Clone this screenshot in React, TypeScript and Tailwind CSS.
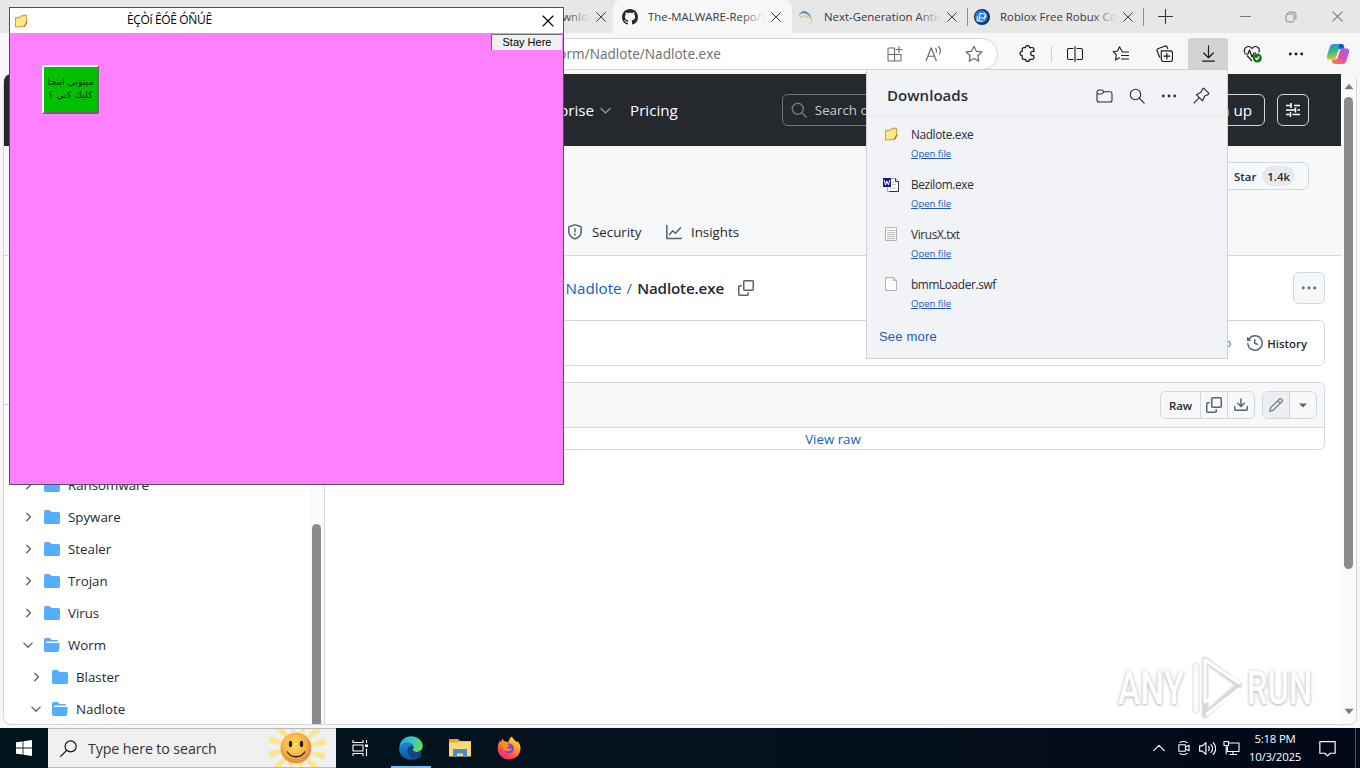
import React from 'react';

interface IconProps {
  className?: string;
  children: React.ReactNode;
  box?: string;
}

// 16px outline icon, stroke follows the text colour
const Line: React.FC<IconProps> = ({ className = 'w-4 h-4', children, box = '0 0 16 16' }) => (
  <svg viewBox={box} className={className} fill="none" stroke="currentColor" strokeWidth="1.1" strokeLinecap="round" strokeLinejoin="round">
    {children}
  </svg>
);

const Solid: React.FC<IconProps> = ({ className = 'w-4 h-4', children, box = '0 0 16 16' }) => (
  <svg viewBox={box} className={className} fill="currentColor">
    {children}
  </svg>
);

const Cross = ({ className }: { className?: string }) => (
  <Line className={className}>
    <path d="M3 3l10 10M13 3L3 13" />
  </Line>
);

const CopyIcon = () => (
  <Solid>
    <path d="M0 6.75C0 5.784.784 5 1.75 5h1.5a.75.75 0 0 1 0 1.5h-1.5a.25.25 0 0 0-.25.25v7.5c0 .138.112.25.25.25h7.5a.25.25 0 0 0 .25-.25v-1.5a.75.75 0 0 1 1.5 0v1.5A1.75 1.75 0 0 1 9.25 16h-7.5A1.75 1.75 0 0 1 0 14.25Z" />
    <path d="M5 1.75C5 .784 5.784 0 6.75 0h7.5C15.216 0 16 .784 16 1.75v7.5A1.75 1.75 0 0 1 14.25 11h-7.5A1.75 1.75 0 0 1 5 9.25Zm1.75-.25a.25.25 0 0 0-.25.25v7.5c0 .138.112.25.25.25h7.5a.25.25 0 0 0 .25-.25v-7.5a.25.25 0 0 0-.25-.25Z" />
  </Solid>
);

const DotsIcon = () => (
  <Solid>
    <circle cx="2.3" cy="8" r="1.4" />
    <circle cx="8" cy="8" r="1.4" />
    <circle cx="13.7" cy="8" r="1.4" />
  </Solid>
);

const StarIcon = () => (
  <Line className="w-[18px] h-[18px]">
    <path d="M8 1.2l2.1 4.4 4.8.6-3.5 3.3.9 4.8L8 12l-4.3 2.3.9-4.8L1.1 6.2l4.8-.6z" />
  </Line>
);

const YellowFolder = () => (
  <svg viewBox="0 0 14 14" className="w-[14px] h-[14px]">
    <path d="M1.5 3.5L6 3l1.5-1.5L12.5 1 13 8l-2.5 4.5-9 .5z" fill="#f3d467" stroke="#a98425" strokeWidth=".7" />
    <path d="M2 5l5-.5L8.5 3l3.5-.3L11 9l-1 2.8-8 .4z" fill="#fbe98c" />
    <path d="M10.5 12.5L13 8" stroke="#7d6010" strokeWidth="1" />
  </svg>
);

interface TabProps {
  title: string;
  icon: React.ReactNode;
  active?: boolean;
  className: string;
  divider?: boolean;
}

const Tab: React.FC<TabProps> = ({ title, icon, active, className, divider }) => (
  <div className={`relative flex items-center h-[33px] shrink-0 ${active ? 'bg-[#f7f7f7] rounded-t-lg' : ''} ${className}`}>
    <div className="w-4 h-4 shrink-0">{icon}</div>
    <div className="relative ml-[10px] w-[117px] overflow-hidden whitespace-nowrap text-[11.4px] text-[#3a3a3a]">
      {title}
      <div className={`absolute right-0 top-0 w-6 h-full bg-gradient-to-r from-transparent ${active ? 'to-[#f7f7f7]' : 'to-[#e7e7e7]'}`} />
    </div>
    <Cross className="w-[14px] h-[14px] ml-[4px] text-[#333] shrink-0" />
    {divider && <div className="absolute right-0 top-2 w-px h-[18px] bg-[#8d8d8d]" />}
  </div>
);

const TabStrip = () => (
  <div className="flex h-[33px] bg-[#e7e7e7]">
    <Tab title="MalwareBase Downloads" className="w-[176px] ml-[437px] pl-[10px]" icon={null} />
    <Tab
      title="The-MALWARE-Repo/Worm"
      active
      className="w-[179px] pl-[9px]"
      icon={
        <Solid className="w-4 h-4 text-[#24292f]">
          <path d="M8 0c4.42 0 8 3.58 8 8a8.013 8.013 0 0 1-5.45 7.59c-.4.08-.55-.17-.55-.38 0-.27.01-1.13.01-2.2 0-.75-.25-1.23-.54-1.48 1.78-.2 3.65-.88 3.65-3.95 0-.88-.31-1.59-.82-2.15.08-.2.36-1.02-.08-2.12 0 0-.67-.22-2.2.82-.64-.18-1.32-.27-2-.27-.68 0-1.36.09-2 .27-1.53-1.03-2.2-.82-2.2-.82-.44 1.1-.16 1.92-.08 2.12-.51.56-.82 1.28-.82 2.15 0 3.06 1.86 3.75 3.64 3.95-.23.2-.44.55-.51 1.07-.46.21-1.61.55-2.33-.66-.15-.24-.6-.83-1.23-.82-.67.01-.27.38.01.53.34.19.73.9.82 1.13.16.45.68 1.31 2.69.94 0 .67.01 1.3.01 1.49 0 .21-.15.45-.55.38A7.995 7.995 0 0 1 0 8c0-4.42 3.58-8 8-8Z" />
        </Solid>
      }
    />
    <Tab
      title="Next-Generation Antivirus"
      divider
      className="w-[176px] pl-[6px]"
      icon={
        <svg viewBox="0 0 16 16" className="w-4 h-4" fill="none" strokeWidth="1.2">
          <path d="M1 6C4 3 7 3 10 5.5" stroke="#7fa9bd" />
          <path d="M3 3.5c5-2 8.500 1 10 6" stroke="#2f7fa8" />
          <path d="M2 9c3-3 6-2.500 8.500 0" stroke="#b9c8ae" />
          <path d="M12 7.500c2.500 2 2.500 5 0 7" stroke="#f1cf5c" />
        </svg>
      }
    />
    <Tab
      title="Roblox Free Robux Codes"
      divider
      className="w-[176px] pl-[6px]"
      icon={
        <svg viewBox="0 0 16 16" className="w-4 h-4">
          <circle cx="8" cy="8" r="8" fill="#10305f" />
          <circle cx="7.4" cy="7.6" r="6.3" fill="#2f7fe0" />
          <path d="M5 11.5l1-7h3.500a2 2 0 0 1 0 4.500H5.500M3.500 7l-.5 5h6M11 6.500l-1 4" stroke="#e4f1ff" strokeWidth="1.1" fill="none" />
        </svg>
      }
    />
    <div className="flex items-center ml-[14px] text-[#333]">
      <Line className="w-[15px] h-[15px]">
        <path d="M8 .5v15M.5 8h15" />
      </Line>
    </div>
    <div className="flex items-center ml-auto text-[#777]">
      <div className="w-[46px] flex justify-center">
        <div className="w-[11px] h-px bg-[#777]" />
      </div>
      <div className="w-[46px] flex justify-center">
        <Line className="w-3 h-3">
          <rect x="1.5" y="4" width="10.5" height="10.5" rx="2" />
          <path d="M5 1.5h7a2.5 2.5 0 0 1 2.5 2.5v7" />
        </Line>
      </div>
      <div className="w-[46px] flex justify-center">
        <Cross className="w-[15px] h-[15px]" />
      </div>
    </div>
  </div>
);

const Copilot = () => (
  <svg viewBox="0 0 24 24" className="w-6 h-6">
    <defs>
      <linearGradient id="cpA" x1="0" y1="0" x2=".3" y2="1">
        <stop offset="0" stopColor="#1f8fe8" />
        <stop offset=".55" stopColor="#36b88c" />
        <stop offset="1" stopColor="#e6c52a" />
      </linearGradient>
      <linearGradient id="cpB" x1=".8" y1="0" x2="0" y2="1">
        <stop offset="0" stopColor="#a45be8" />
        <stop offset=".55" stopColor="#e8559a" />
        <stop offset="1" stopColor="#f78a45" />
      </linearGradient>
    </defs>
    <path d="M8 2h7.500c1.400 0 2 .9 2.400 2.200L18.500 6.500H15c-1.800 0-2.500 1-3 2.700L10.300 15c-.5 1.700-1.300 2.500-3 2.500H3.500C1 17.500.5 15.500 1.200 13L3.700 5C4.500 2.800 5.500 2 8 2z" fill="url(#cpA)" />
    <path d="M16 22H8.500c-1.400 0-2-.9-2.400-2.200L5.500 17.500H9c1.800 0 2.500-1 3-2.700L13.700 9c.5-1.700 1.300-2.500 3-2.500h3.800c2.500 0 3 2 2.300 4.500L20.300 19c-.8 2.200-1.800 3-4.300 3z" fill="url(#cpB)" />
    <path d="M13 2h2.500c1.400 0 2 .9 2.400 2.200l.6 2.300H15c-1 0-1.700.4-2.200 1z" fill="#2450c8" />
  </svg>
);

const Toolbar = () => (
  <div className="flex items-center h-[41px] bg-[#f7f7f7] text-[#1b1b1b]">
    <div className="flex items-center w-[890px] ml-[108px] h-[32px] bg-white border border-[#d5d5d5] rounded-full text-[#6d6d6d] pr-[14px]">
      <div className="w-[612px] pt-[2px] text-right text-[13.6px] whitespace-nowrap">The-MALWARE-Repo/blob/master/Worm/Nadlote/Nadlote.exe</div>
      <div className="flex items-center ml-auto gap-[22px]">
        <Line className="w-4 h-4">
          <path d="M7.5 2H2a1 1 0 0 0-1 1v11a1 1 0 0 0 1 1h11a1 1 0 0 0 1-1V8.500H1M7.500 2v13M12 .5v6M9 3.500h6" />
        </Line>
        <Line className="w-[18px] h-[18px]">
          <path d="M1 14L5.500 2.500 10 14M2.700 10h5.600M9.500 3c1 1 1 2.500.5 3.500M12 1.500c2 2 2 4.500.8 6.500" />
        </Line>
        <StarIcon />
      </div>
    </div>
    <div className="w-11 ml-[7px] flex justify-center">
      <Line className="w-[17px] h-[17px]">
        <path strokeWidth="1.2" d="M4.500 2.500H6a2 2 0 0 1 4 0h2.500a1.500 1.500 0 0 1 1.500 1.500v2h-1a2 2 0 1 0 0 4h1v2a1.500 1.500 0 0 1-1.500 1.500H10a2 2 0 0 1-4 0H4.500A1.500 1.500 0 0 1 3 12v-2a2 2 0 1 1 0-4V4a1.500 1.500 0 0 1 1.500-1.500z" />
      </Line>
    </div>
    <div className="w-px h-4 ml-[2px] mr-px bg-[#cfcfcf]" />
    <div className="w-11 flex justify-center">
      <Line className="w-4 h-4">
        <path d="M6 2.500H2a1.500 1.500 0 0 0-1.500 1.500v8A1.500 1.500 0 0 0 2 13.500h4M10 2.500h4a1.500 1.500 0 0 1 1.500 1.500v8a1.500 1.500 0 0 1-1.500 1.500h-4M8 .5v15" />
      </Line>
    </div>
    <div className="w-11 ml-px flex justify-center">
      <Line className="w-[17px] h-4">
        <path d="M9.500 5.300L7 .8 5 5 .6 5.700l3.200 3.200L3 14l4-2.200M10 6h6M9 9.500h7M9 13h7" />
      </Line>
    </div>
    <div className="w-11 flex justify-center">
      <Line className="w-[17px] h-[17px]">
        <path d="M3.500 11.500L1 5.500a1.500 1.500 0 0 1 .8-2L8.500 1a1.500 1.500 0 0 1 1.900.8l.6 1.500M5 5.500h8.500A2 2 0 0 1 15.500 7.500v6a2 2 0 0 1-2 2H7a2 2 0 0 1-2-2zM10.200 7.800v5.400M7.500 10.500h5.400" />
      </Line>
    </div>
    <div className="w-10 h-[31px] ml-[2px] flex items-center justify-center bg-[#d3d3d3] rounded-t-[3px]">
      <Line className="w-[17px] h-[17px]">
        <path d="M8 .8v11M3.500 7.500L8 12l4.500-4.500M2.500 15.200h11" />
      </Line>
    </div>
    <div className="w-11 ml-[3px] flex justify-center">
      <svg viewBox="0 0 20 18" className="w-5 h-[18px]" fill="none" stroke="#1b1b1b" strokeWidth="1.2" strokeLinejoin="round">
        <path d="M2 8C0 4 3 1.500 5.500 1.500 7.500 1.500 9 3.500 9 3.500S10.500 1.500 12.500 1.500c3 0 4.800 3 3.200 6M4 10.500l5 5.500" />
        <path d="M1.500 9H5l1.500-4 2.500 7 2-4h2" />
        <circle cx="14.3" cy="13" r="4.5" fill="#107c10" stroke="none" />
        <path d="M12.300 13l1.500 1.500 2.500-3" stroke="#fff" />
      </svg>
    </div>
    <div className="w-[42px] flex justify-center">
      <DotsIcon />
    </div>
    <div className="w-[42px] flex justify-center">
      <Copilot />
    </div>
  </div>
);

const SiteHeader = () => (
  <div className="flex items-center h-[72px] shrink-0 bg-[#25292e] text-white text-[15.2px]">
    <div className="w-[590px] text-right">Enterprise</div>
    <Line className="w-[11px] h-[11px] ml-[6px] text-[#8b949e]">
      <path strokeWidth="2" d="M1.500 5L8 11.500 14.500 5" />
    </Line>
    <div className="ml-[19px]">Pricing</div>
    <div className="flex items-center h-8 w-[320px] ml-[104px] pl-[8px] border border-[#70767d] rounded-md text-[13.3px] text-[#c5cad0]">
      <Line className="w-4 h-4 mr-[8px] text-[#6e7681]">
        <circle cx="6.8" cy="6.8" r="5.5" strokeWidth="1.5" />
        <path strokeWidth="1.5" d="M11 11l4 4" />
      </Line>
      <span className="pt-[2px]">Search or jump to...</span>
    </div>
    <div className="flex items-center justify-end h-8 w-[74px] ml-auto pr-3 border border-[#d0d7de] rounded-md">Sign up</div>
    <div className="flex items-center justify-center w-8 h-8 ml-3 mr-8 border border-[#d0d7de] rounded-md">
      <Line className="w-4 h-4">
        <path strokeWidth="1.5" strokeLinecap="butt" d="M1 3.500h5M9 3.500h6M6 1v5M1 8h9M12.500 8H15M10.500 5.500v5M1 12.500h3.500M7.500 12.500H15M5.500 10v5" />
      </Line>
    </div>
  </div>
);

const RepoHead = () => (
  <div className="flex flex-col h-[110px] shrink-0 bg-[#f6f8fa] border-b border-[#d1d9e0] text-[#25292e]">
    <div className="flex justify-end pt-4 pr-8">
      <div className="flex items-center justify-end h-7 w-[110px] pr-[13px] border border-[#d1d9e0] rounded-md text-[11.4px] font-semibold">
        <span className="pt-px">Star</span>
        <span className="flex items-center h-5 px-[5px] pt-px ml-[6px] rounded-full bg-[#e8e9ef]">1.4k</span>
      </div>
    </div>
    <div className="flex items-center pl-[563px] mt-8 text-[13.3px]">
      <span className="text-[#59636e]">
        <Solid>
          <path d="M7.467.133a1.748 1.748 0 0 1 1.066 0l5.250 1.680A1.750 1.750 0 0 1 15 3.480V7c0 1.566-.320 3.182-1.303 4.682-.983 1.498-2.585 2.813-5.032 3.855a1.697 1.697 0 0 1-1.330 0c-2.447-1.042-4.049-2.357-5.032-3.855C1.320 10.182 1 8.566 1 7V3.480a1.750 1.750 0 0 1 1.217-1.667Zm.610 1.429a.250.250 0 0 0-.153 0l-5.250 1.680a.250.250 0 0 0-.174.238V7c0 1.358.275 2.666 1.057 3.860.784 1.194 2.121 2.340 4.366 3.297a.196.196 0 0 0 .154 0c2.245-.956 3.582-2.104 4.366-3.298C13.225 9.666 13.500 8.360 13.500 7V3.480a.251.251 0 0 0-.174-.237l-5.250-1.680ZM8.750 4.750v3a.750.750 0 0 1-1.500 0v-3a.750.750 0 0 1 1.500 0ZM9 10.500a1 1 0 1 1-2 0 1 1 0 0 1 2 0Z" />
        </Solid>
      </span>
      <span className="ml-[9px] w-[49px] pt-px">Security</span>
      <span className="ml-[25px] text-[#59636e]">
        <Line>
          <path strokeWidth="1.5" d="M.8 1.500v13h14.500M3.500 10.500l3.300-3.800 2.700 2.500 5-5.500" />
        </Line>
      </span>
      <span className="ml-[9px] pt-px">Insights</span>
    </div>
  </div>
);

interface FolderRow {
  name: string;
  open?: boolean;
  nested?: boolean;
}

const folders: FolderRow[] = [
  { name: 'Ransomware' },
  { name: 'Spyware' },
  { name: 'Stealer' },
  { name: 'Trojan' },
  { name: 'Virus' },
  { name: 'Worm', open: true },
  { name: 'Blaster', nested: true },
  { name: 'Nadlote', open: true, nested: true },
];

const FileTree = () => (
  <div className="flex w-[321px] shrink-0 border-r border-[#d1d9e0]">
    <div className="flex flex-col flex-1">
      <div className="h-[149px] shrink-0 border-b border-[#d1d9e0]" />
      <div className="pt-[64px] text-[13.3px] text-[#25292e]">
        {folders.map((f) => (
          <div key={f.name} className={`flex items-center h-8 ${f.nested ? 'pl-[27px]' : 'pl-[19px]'}`}>
            <Line className="w-[10px] h-[10px] text-[#59636e]">
              {f.open ? <path strokeWidth="2.2" d="M1.500 5L8 11.500 14.500 5" /> : <path strokeWidth="2.2" d="M6 2l6 6-6 6" />}
            </Line>
            <Solid className="w-4 h-4 ml-[11px] mr-2 text-[#54aeff]">
              {f.open ? (
                <path d="M.513 1.513A1.750 1.750 0 0 1 1.750 1h3.500c.550 0 1.070.260 1.400.700l.900 1.200a.250.250 0 0 0 .200.100H13a1 1 0 0 1 1 1v.500H2.750a.750.750 0 0 0 0 1.500h11.978a1 1 0 0 1 .994 1.117L15 13.250A1.750 1.750 0 0 1 13.250 15H1.750A1.750 1.750 0 0 1 0 13.250V2.750c0-.464.184-.910.513-1.237Z" />
              ) : (
                <path d="M1.750 1A1.750 1.750 0 0 0 0 2.750v10.500C0 14.216.784 15 1.750 15h12.500A1.750 1.750 0 0 0 16 13.250v-8.500A1.750 1.750 0 0 0 14.250 3H7.500a.250.250 0 0 1-.200-.100l-.900-1.200C6.070 1.260 5.550 1 5 1H1.750Z" />
              )}
            </Solid>
            <span className="pt-px">{f.name}</span>
          </div>
        ))}
      </div>
    </div>
    <div className="w-[14px] bg-[#fafafa] pt-[268px] pl-[2px]">
      <div className="w-[9px] h-[210px] rounded-t-full bg-[#8b8b8b]" />
    </div>
  </div>
);

const FileView = () => (
  <div className="flex flex-col flex-1 px-4 pt-4 text-[#25292e]">
    <div className="flex items-center h-8 text-[15.2px]">
      <div className="flex items-center w-[383px] justify-end whitespace-nowrap">
        <span className="text-[#0f62c2]">Nadlote</span>
        <span className="mx-[5px] text-[#59636e]">/</span>
        <span className="font-semibold tracking-[-0.15px]">Nadlote.exe</span>
      </div>
      <span className="ml-[14px] text-[#59636e]">
        <CopyIcon />
      </span>
      <div className="flex items-center justify-center w-8 h-8 ml-auto border border-[#d1d9e0] rounded-md bg-[#f6f8fa] text-[#59636e]">
        <DotsIcon />
      </div>
    </div>
    <div className="flex items-center justify-end h-[46px] mt-4 pr-[17px] border border-[#d1d9e0] rounded-md text-[11.4px]">
      <span className="text-[#59636e]">5 years ago</span>
      <span className="ml-4 mr-1 text-[#59636e]">
        <Solid>
          <path d="m.427 1.927 1.215 1.215a8.002 8.002 0 1 1-1.600 5.685.750.750 0 1 1 1.493-.154 6.500 6.500 0 1 0 1.180-4.458l1.358 1.358A.250.250 0 0 1 3.896 6H.250A.250.250 0 0 1 0 5.750V2.104a.250.250 0 0 1 .427-.177ZM7.750 4a.750.750 0 0 1 .750.750v2.992l2.028.812a.750.750 0 0 1-.557 1.392l-2.500-1A.751.751 0 0 1 7 8.250v-3.500A.750.750 0 0 1 7.750 4Z" />
        </Solid>
      </span>
      <span className="pt-[2px] font-semibold">History</span>
    </div>
    <div className="h-[68px] mt-4 border border-[#d1d9e0] rounded-md">
      <div className="flex items-center justify-end h-[45px] pr-[7px] bg-[#f6f8fa] border-b border-[#d1d9e0] rounded-t-md text-[#59636e]">
        <div className="flex h-7 border border-[#d1d9e0] rounded-md">
          <div className="flex items-center justify-center w-[39px] pt-[2px] text-[11.4px] font-semibold text-[#25292e]">Raw</div>
          <div className="flex items-center justify-center w-[27px] border-l border-[#d1d9e0]">
            <CopyIcon />
          </div>
          <div className="flex items-center justify-center w-[27px] border-l border-[#d1d9e0]">
            <Solid>
              <path d="M2.750 14A1.750 1.750 0 0 1 1 12.250v-2.500a.750.750 0 0 1 1.500 0v2.500c0 .138.112.250.250.250h10.500a.250.250 0 0 0 .250-.250v-2.500a.750.750 0 0 1 1.500 0v2.500A1.750 1.750 0 0 1 13.250 14Z" />
              <path d="M7.250 7.689V2a.750.750 0 0 1 1.500 0v5.689l1.970-1.969a.749.749 0 1 1 1.060 1.060l-3.250 3.250a.749.749 0 0 1-1.060 0L4.220 6.780a.749.749 0 1 1 1.060-1.060l1.970 1.969Z" />
            </Solid>
          </div>
        </div>
        <div className="flex h-7 w-[55px] ml-[7px] border border-[#d1d9e0] rounded-md">
          <div className="flex items-center justify-center w-[26px] bg-[#eceef2] rounded-l-md text-[#818b98]">
            <Solid>
              <path d="M11.013 1.427a1.750 1.750 0 0 1 2.474 0l1.086 1.086a1.750 1.750 0 0 1 0 2.474l-8.610 8.610c-.210.210-.470.364-.756.445l-3.251.930a.750.750 0 0 1-.927-.928l.929-3.250c.081-.286.235-.547.445-.758l8.610-8.610Zm.176 4.823L9.750 4.810l-6.286 6.287a.253.253 0 0 0-.064.108l-.558 1.953 1.953-.558a.253.253 0 0 0 .108-.064Zm1.238-3.763a.250.250 0 0 0-.354 0L10.811 3.750l1.439 1.440 1.263-1.263a.250.250 0 0 0 0-.354Z" />
            </Solid>
          </div>
          <div className="flex items-center justify-center flex-1 border-l border-[#d1d9e0]">
            <Solid>
              <path d="M4 6.500h8L8 10.500z" />
            </Solid>
          </div>
        </div>
      </div>
      <div className="flex items-center justify-center h-[21px] pt-[2px] text-[13.3px] text-[#0f62c2]">View raw</div>
    </div>
  </div>
);

const downloads = [
  { name: 'Nadlote.exe', kind: 'folder' },
  { name: 'Bezilom.exe', kind: 'word' },
  { name: 'VirusX.txt', kind: 'text' },
  { name: 'bmmLoader.swf', kind: 'blank' },
];

const FileIcon = ({ kind }: { kind: string }) => {
  if (kind === 'folder') return <YellowFolder />;
  if (kind === 'word')
    return (
      <svg viewBox="0 0 16 16" className="w-4 h-4">
        <path d="M4.500 1.500h8l3 3v10h-11z" fill="#fff" stroke="#a5a5a5" />
        <path d="M12.500 1.500v3h3v10h-9" fill="none" stroke="#333" />
        <path d="M9 5.500h3M9 7.500h4M7 11h6" stroke="#c5c5c5" />
        <rect x="0" y="1" width="8" height="9" fill="#1b1b8c" />
        <path d="M1.200 3l1.300 5L4 4l1.500 4 1.300-5" stroke="#fff" fill="none" />
      </svg>
    );
  return (
    <svg viewBox="0 0 12 14" className="w-3 h-[14px]">
      <path d={kind === 'text' ? 'M.5.5h11v13H.5z' : 'M.5.5H8.500l3 3v10H.5z'} fill="#fafafa" stroke="#b3b3b3" />
      {kind === 'text' && <path d="M2 3.500h8M2 5.500h8M2 7.500h8M2 9.500h8M2 11.500h8" stroke="#bdbdbd" />}
      {kind === 'blank' && <path d="M8.500.5v3h3" fill="none" stroke="#b5b5b5" />}
    </svg>
  );
};

const DownloadsPopup = () => (
  <div className="absolute left-[866px] top-[69px] w-[362px] h-[290px] bg-[#f1f3f7] border border-[#cfd1d6] text-[#2a2d33]">
    <div className="flex items-center h-[46px] pl-5 pt-[6px] pr-[17px] border-b border-[#e4e6ea]">
      <span className="text-[15.1px] font-semibold">Downloads</span>
      <div className="flex items-center gap-4 ml-auto">
        <Line className="w-[17px] h-4">
          <path d="M.6 4a2 2 0 0 1 2-2h3.200l1.500 1.700h6.200a2 2 0 0 1 2 2V12a2 2 0 0 1-2 2h-11a2 2 0 0 1-2-2zM.6 6h4.700l2-2.200" />
        </Line>
        <Line>
          <circle cx="6.5" cy="6.5" r="5.2" />
          <path d="M10.500 10.500l4.700 4.700" />
        </Line>
        <DotsIcon />
        <Line className="w-[17px] h-[17px]">
          <path d="M10 1l5 5-1 1.200-3 1.300-2 4.500L3.200 7.200 7.500 5 9 2zM5.800 10.200L1 15" />
        </Line>
      </div>
    </div>
    <div className="flex flex-col">
      {downloads.map((d) => (
        <div key={d.name} className="flex h-[50px] pl-4">
          <div className="flex justify-center w-4 pt-[11px]">
            <FileIcon kind={d.kind} />
          </div>
          <div className="flex flex-col ml-3 pt-[10px]">
            <span className="h-[18px] leading-[17px] text-[11.8px] tracking-[-0.35px]">{d.name}</span>
            <span className="h-[18px] leading-[18px] mt-[1px] text-[9.5px] text-[#2358b8] underline">Open file</span>
          </div>
        </div>
      ))}
    </div>
    <div className="pl-3 pt-[11px] font-['Liberation_Sans',sans-serif] text-[13px] leading-[20px] tracking-[0.2px] text-[#2358b8]">See more</div>
  </div>
);

const PinkWindow = () => (
  <div className="absolute left-[9px] top-[7px] w-[555px] h-[478px] flex flex-col bg-[#ff80ff] border border-[#5a4a5a]">
    <div className="flex items-center h-[25px] bg-white pl-[4px] pr-[7px] text-black">
      <YellowFolder />
      <span className="ml-[99px] pb-[2px] text-[12px] tracking-[-0.35px]">ÈÇÒí ÊÓÊ ÓÑÚÊ</span>
      <Cross className="w-4 h-4 ml-auto" />
    </div>
    <div className="flex justify-end">
      <div className="flex items-center justify-center w-[71px] h-[16px] mt-px mr-px bg-[#f0f0f0] border-t border-l border-[#6d6d6d] font-['Liberation_Sans',sans-serif] text-[11px] text-black">
        Stay Here
      </div>
    </div>
    <div
      dir="rtl"
      className="flex flex-col items-center justify-center w-[57px] h-[49px] ml-[32px] mt-[15px] pb-[3px] bg-[#00c000] border-2 border-t-white border-l-white border-r-[#6a6a6a] border-b-[#6a6a6a] font-['DejaVu_Sans',sans-serif] text-[9.4px] leading-[13px] text-[#002800] whitespace-nowrap"
    >
      <span>ميتوني اينجا</span>
      <span>كليك كني ؟</span>
    </div>
  </div>
);

const Watermark = () => (
  <div className="absolute left-[1118px] top-[655px] w-[194px] h-[66px] flex items-center justify-between font-['Roboto',sans-serif] text-[46px] font-medium text-[#fdfdfd] [text-shadow:0_1px_3px_#b8b8b8,0_0_5px_#dcdcdc]">
    <span className="w-[65px] origin-left scale-x-[0.73]">ANY</span>
    <svg viewBox="0 0 56 66" className="w-14 h-[66px] shrink-0" fill="none" strokeLinejoin="round" strokeLinecap="round">
      <path d="M18 5L52 30 18 60V5zM9 11v44" stroke="#e2e2e2" strokeWidth="8" opacity=".6" />
      <path d="M18 5L52 30 18 60V5z" stroke="#cdcdcd" strokeWidth="5" opacity=".7" />
      <path d="M18 5L52 28M18 5v42L42 30 24 17M9 11v44M52 34L20 59" stroke="#fff" strokeWidth="3" />
    </svg>
    <span className="w-[65px] origin-left scale-x-[0.71]">RUN</span>
  </div>
);

const Sun = () => (
  <svg viewBox="0 0 60 38" className="w-[60px] h-[38px]">
    <defs>
      <radialGradient id="sun" cx=".45" cy=".4">
        <stop offset="0" stopColor="#ffd95a" />
        <stop offset=".7" stopColor="#fbb648" />
        <stop offset="1" stopColor="#ea9340" />
      </radialGradient>
    </defs>
    {[0, 30, 60, 90, 120, 150, 180, 210, 240, 270, 300, 330].map((a) => (
      <path key={a} d="M26.500 -10l7 0-1.500 13h-4z" fill="#fae68e" transform={`rotate(${a + 15} 29 19)`} />
    ))}
    <circle cx="28" cy="19" r="15.5" fill="url(#sun)" />
    <ellipse cx="22.5" cy="15" rx="1.7" ry="3.2" fill="#222" />
    <ellipse cx="33.5" cy="15" rx="1.7" ry="3.2" fill="#222" />
    <path d="M19 22.500c4 7 14 7 18 0" stroke="#222" strokeWidth="1.3" fill="none" />
  </svg>
);

const EdgeLogo = () => (
  <svg viewBox="0 0 24 24" className="w-6 h-6">
    <defs>
      <linearGradient id="edA" x1="0" y1="0" x2="1" y2=".3">
        <stop offset="0" stopColor="#2aa5dc" />
        <stop offset=".5" stopColor="#35c1c4" />
        <stop offset="1" stopColor="#5fdc62" />
      </linearGradient>
      <linearGradient id="edB" x1="0" y1="0" x2=".6" y2="1">
        <stop offset="0" stopColor="#1b8fdc" />
        <stop offset="1" stopColor="#0c4d9c" />
      </linearGradient>
    </defs>
    <path d="M.5 11C1 4.500 6 .2 12 .2c7 0 11.800 5 11.800 9.800 0 3.800-3 6-6 6-3.300 0-4.300-1.300-4.300-1.900 0-.6.9-1.100.9-2.700C14.400 8.500 11.500 7 8.500 7 4 7 1 9.500.5 11z" fill="url(#edA)" />
    <path d="M.3 12C.8 8.800 4.500 6.600 8.500 6.600c3.300 0 5.900 2 5.900 4.400C11 9.500 8.500 12 8.700 15c.3 4 4 6.300 8 5.900 2.500-.3 4.300-1.500 5.200-2 .4-.2.7.1.4.5C20 22.500 16.500 23.800 12.300 23.800 5.500 23.800-.5 18.500.3 12z" fill="url(#edB)" />
    <path d="M8.700 15c-.2-3 2.300-5.500 5.700-4 .2 1.700-.9 2.500-.9 3.100 0 .6 1 1.900 4.300 1.900 1.500 0 3-.5 4.200-1.500.5 1.500.3 3-.1 4.400-.9.5-2.700 1.700-5.200 2-4 .4-7.700-1.900-8-5.900z" fill="#12457f" />
  </svg>
);

const ExplorerLogo = () => (
  <svg viewBox="0 0 22 20" className="w-[22px] h-5">
    <path d="M0 2a1 1 0 0 1 1-1h8l2 2h10a1 1 0 0 1 1 1v14H0z" fill="#e8a33a" />
    <path d="M0 4.500h9l1.500-1H22v15H0z" fill="#fdd87a" />
    <path d="M4 19v-7a1 1 0 0 1 1-1h12a1 1 0 0 1 1 1v7h-4v-3.500H8V19z" fill="#4390c8" />
  </svg>
);

const FirefoxLogo = () => (
  <svg viewBox="0 0 24 24" className="w-6 h-6">
    <defs>
      <linearGradient id="ff" x1=".8" y1="0" x2=".2" y2="1">
        <stop offset="0" stopColor="#ffe63b" />
        <stop offset=".4" stopColor="#ff9a2b" />
        <stop offset=".75" stopColor="#ff4053" />
        <stop offset="1" stopColor="#e22684" />
      </linearGradient>
    </defs>
    <path d="M15 .5c1 2.500 3 3.500 4.500 5.500 1 0 1-1 1-1C23 8 24 11 23.300 14.500 22.300 20 17.500 23.500 12 23.500 5.500 23.500.7 18.500.7 12.500c0-3.500 1-6 2.300-8L3.500 6.500 5.500 2.500c.3 1.500 1.500 2.500 2.500 3 1.800 0 3 .5 3.500 1C11.500 4 13 1.500 15 .5z" fill="url(#ff)" />
    <circle cx="12" cy="12.5" r="5" fill="#8046d8" />
    <path d="M5.500 8c2-1.500 4-1 5.500.5 1 .2 1.500.5 1.500 1-.5 1.200-2.500 1-2.500 2.500 1.500 1.500 4 .5 5 .5-1 3-6 4-8 1C5.500 12 5 10 5.500 8z" fill="#ff8a28" />
  </svg>
);

const Taskbar = () => (
  <div className="flex items-center h-10 bg-gradient-to-r from-[#00151c] via-[#04121f] to-[#020817] text-white">
    <div className="w-12 flex justify-center">
      <Solid>
        <path d="M0 2.300L6.600 1.400v6.200H0zM7.400 1.300L16 0v7.600H7.400zM0 8.400h6.600v6.200L0 13.700zM7.400 8.400H16V16l-8.600-1.200z" />
      </Solid>
    </div>
    <div className="flex items-center w-[288px] h-10 bg-[#f0f0f0] border-y border-[#b9b9b9] pl-3 text-[#333]">
      <Line className="w-[17px] h-[17px] text-[#111]">
        <circle cx="10" cy="6" r="5.2" />
        <path d="M6.300 9.700L.7 15.300" />
      </Line>
      <span className="ml-[11px] pt-px text-[14.2px] tracking-[-0.1px] w-[129px] whitespace-nowrap">Type here to search</span>
      <div className="ml-[51px]">
        <Sun />
      </div>
    </div>
    <div className="w-12 flex justify-center">
      <Line className="w-[17px] h-4">
        <path strokeLinecap="butt" d="M.5 0v2.500h10V0M.5 16v-2.500h10V16M.5 5h10v6H.5zM14 0v3M14 8.500V16" />
        <path strokeWidth="3" strokeLinecap="butt" d="M14 4.500v2.500" />
      </Line>
    </div>
    <div className="relative w-[54px] h-10 flex items-center justify-center">
      <EdgeLogo />
      <div className="absolute left-[7px] bottom-0 w-10 h-[2px] bg-[#76b9ed]" />
    </div>
    <div className="w-[44px] flex justify-center">
      <ExplorerLogo />
    </div>
    <div className="w-[54px] flex justify-center">
      <FirefoxLogo />
    </div>
    <div className="flex items-center h-10 ml-auto">
      <div className="w-6 flex justify-center">
        <Line className="w-3 h-3">
          <path strokeWidth="1.5" d="M1 11.500l7-7 7 7" />
        </Line>
      </div>
      <div className="w-6 flex justify-center">
        <Line className="w-[15px] h-4">
          <path d="M4 2.200c2-1.600 6-1.600 8 0M4 13.800c2 1.600 6 1.600 8 0M3 4.500h7v7H3zM10 7l4-2v6l-4-2" />
        </Line>
      </div>
      <div className="w-6 flex justify-center">
        <Line className="w-[17px] h-[17px]">
          <path d="M.6 5.500h2.500L6.500 2.500v11L3.100 10.500H.6zM9 6c.8 1.200.8 2.800 0 4M11.300 4.300c1.800 2.200 1.800 5.200 0 7.400M13.500 2.500c2.600 3.300 2.600 7.700 0 11" />
        </Line>
      </div>
      <div className="w-6 flex justify-center">
        <Line className="w-[17px] h-4">
          <path d="M5.500 3h10v8.500H4V7M.5 1.500h4.500v4H.5zM2.700 5.500V14M9.500 11.500v3M6.500 14.500h6.500" />
        </Line>
      </div>
      <div className="w-[64px] flex flex-col items-center text-[11.4px] leading-[18px] tracking-[-0.2px] whitespace-nowrap">
        <span>5:18 PM</span>
        <span>10/3/2025</span>
      </div>
      <div className="w-[40px] flex justify-center">
        <Line className="w-[17px] h-[17px]">
          <path d="M.8 1.500h14.400v11h-4.700L8 15l-2.500-2.500H.8z" />
        </Line>
      </div>
      <div className="w-px h-10 ml-[8px] mr-1 bg-[#4a5160]" />
    </div>
  </div>
);

const App: React.FC = () => {
  return (
    <div className="relative flex flex-col w-[1360px] h-[768px] overflow-hidden bg-[#f7f7f7] font-['Open_Sans','Noto_Sans',sans-serif]">
      <TabStrip />
      <Toolbar />
      <div className="flex h-[651px] mx-[3px] mb-[3px] bg-white rounded-lg overflow-hidden border-x border-b border-[#d5d5d5]">
        <div className="flex flex-col flex-1">
          <SiteHeader />
          <RepoHead />
          <div className="flex flex-1 overflow-hidden">
            <FileTree />
            <FileView />
          </div>
        </div>
        <div className="flex flex-col items-center justify-between w-[15px] py-[8px] bg-[#fafafa] text-[#7d7d7d]">
          <div className="flex flex-col items-center gap-[6px]">
            <Solid className="w-[10px] h-[9px]">
              <path d="M0 13l8-10 8 10z" />
            </Solid>
            <div className="w-[9px] h-[472px] rounded-full bg-[#8b8b8b]" />
          </div>
          <Solid className="w-[10px] h-[9px]">
            <path d="M0 3l8 10 8-10z" />
          </Solid>
        </div>
      </div>
      <Taskbar />
      <DownloadsPopup />
      <PinkWindow />
      <Watermark />
    </div>
  );
};

export default App;
